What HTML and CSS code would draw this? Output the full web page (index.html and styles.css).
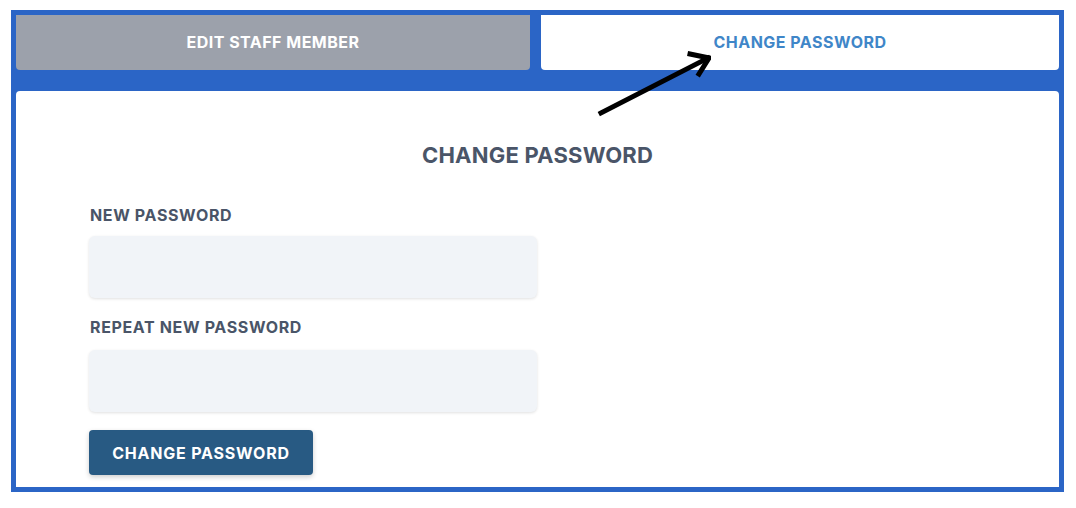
FILE: index.html
```html
<!DOCTYPE html>
<html lang="en">
<head>
  <meta charset="utf-8">
  <title>Change Password</title>
  <link rel="stylesheet" href="styles.css">
</head>
<body>

<div class="frame">
  <div class="tabs">
    <div class="tab">EDIT STAFF MEMBER</div>
    <div class="tab active">CHANGE PASSWORD</div>
  </div>

  <div class="panel">
    <h2>CHANGE PASSWORD</h2>
    <form class="form">
      <label for="pw1">NEW PASSWORD</label>
      <input id="pw1" type="password">
      <label for="pw2" class="repeat">REPEAT NEW PASSWORD</label>
      <input id="pw2" type="password">
      <button type="button">CHANGE PASSWORD</button>
    </form>
  </div>

  <svg class="arrow" width="130" height="80" viewBox="0 0 130 80">
    <g fill="none" stroke="#000" stroke-width="5" stroke-linecap="square" stroke-linejoin="miter">
      <path d="M20 69 L127 14"/>
      <path d="M109 10 L128 14 L118 30"/>
    </g>
  </svg>
</div>

</body>
</html>
```

FILE: styles.css
```css
body {margin: 10px 12px 0 11px; background: #fff; font-family: Inter, "Liberation Sans", sans-serif;}
.frame {position: relative; height: 472px; border: 5px solid #2b65c6; background: #2b65c6; display: flex; flex-direction: column;}
.tabs {display: flex; gap: 11px; height: 55px; margin-bottom: 21px;}
.tab {flex: 514 1 0; display: flex; align-items: center; justify-content: center; padding-bottom: 2px; background: #9ca1ab; color: #fff; font-weight: 700; font-size: 16px; letter-spacing: .03em; border-radius: 0 0 4px 4px;}
.tab.active {flex: 518 1 0; background: #fff; color: #3f86c8;}
.panel {flex: 1; background: #fff; border-radius: 4px 4px 0 0; padding: 51px 73px 0;}
h2 {margin: 0 0 38px; text-align: center; color: #4a5568; font-size: 22px; font-weight: 700; letter-spacing: .01em;}
.form {display: flex; flex-direction: column; align-items: flex-start; width: 448px;}
label {color: #4a5568; font-size: 16px; font-weight: 700; letter-spacing: .04em; margin: 0 0 12px 1px; line-height: 18px;}
label.repeat {margin-bottom: 14px;}
input {box-sizing: border-box; width: 448px; height: 62px; margin: 0 0 20px; border: 0; border-radius: 6px; background: #f1f4f8; box-shadow: 0 1px 3px rgba(0,0,0,.12);}
input + label + input {margin-bottom: 18px;}
button {height: 45px; width: 224px; border: 0; border-radius: 4px; background: #285a83; color: #fff; font-family: inherit; font-size: 16px; font-weight: 700; letter-spacing: .05em; box-shadow: 0 2px 5px rgba(0,0,0,.2);}
.arrow {position: absolute; left: 565px; top: 29px;}
```
